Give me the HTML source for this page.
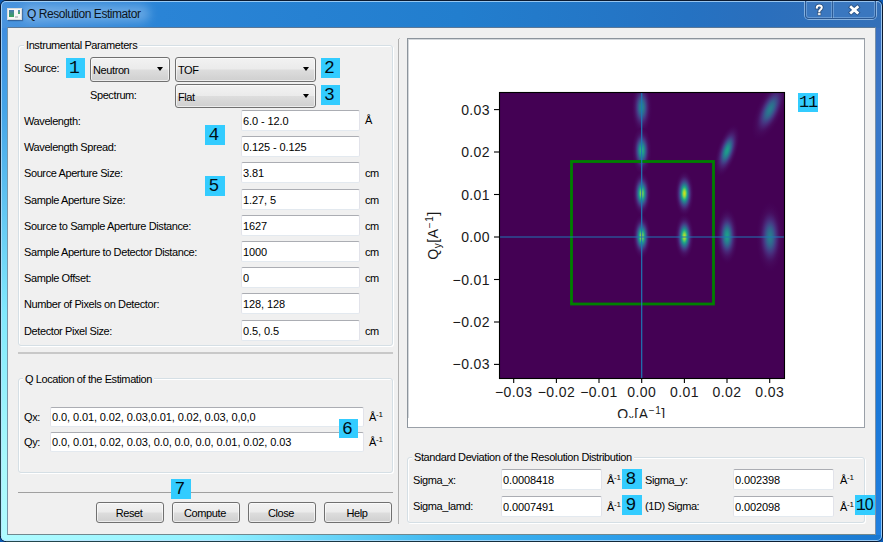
<!DOCTYPE html>
<html><head><meta charset="utf-8">
<style>
*{box-sizing:border-box}
html,body{margin:0;padding:0;width:883px;height:542px;overflow:hidden;background:#0c5ab2}
body{position:relative;font-family:"Liberation Sans",sans-serif;font-size:11px;color:#000}
.a{position:absolute}
#frame{left:0;top:0;width:883px;height:542px;border-radius:6px;background:#2d7ad0;border:1px solid #0b1a30;overflow:hidden}
#tb{left:0;top:0;width:881px;height:27px;background:linear-gradient(90deg,#4a94de 0%,#3a8cda 8%,#2a84d6 18%,#227ece 52%,#2572c2 78%,#2a6fbd 86%,#3470b8 100%)}
#lf{left:0;top:27px;width:7px;height:514px;background:linear-gradient(180deg,#3f8ee0 0%,#45a5e8 16%,#80e8fc 55%,#a8f8fc 84%,#b0fcff 100%)}
#rf{left:875px;top:27px;width:7px;height:514px;background:linear-gradient(180deg,#3a70c0 0%,#3a78c8 16%,#1a78d8 74%,#2080e0 100%)}
#bf{left:0;top:534px;width:881px;height:7px;background:linear-gradient(90deg,#b0fcff 0%,#90f0ff 25%,#40b8f0 50%,#2898e8 75%,#1a78d0 100%)}
#client{left:7px;top:27px;width:869px;height:508px;background:#f0f0f0;border:1px solid #5a7898;border-left-color:#7896a8;border-right-color:#7890a8;border-bottom-color:#70888e}
.t{position:absolute;white-space:nowrap;letter-spacing:-0.4px;line-height:13px;height:13px}
.badge{position:absolute;background:#33ccff;font-family:"Liberation Mono",monospace;font-size:18px;line-height:20px;text-align:center;text-indent:-2px;color:#001018}
.edit{position:absolute;background:#fff;border:1px solid #e2e3ea;border-top-color:#abadb3;border-bottom-color:#e3e9ef;border-radius:2px;height:21px}
.edit span{position:absolute;left:1px;top:4px;white-space:nowrap;letter-spacing:-0.1px;line-height:13px}
.btn{position:absolute;border:1px solid #707070;border-radius:3px;background:linear-gradient(180deg,#f2f2f2 0%,#ebebeb 48%,#dddddd 52%,#cfcfcf 100%);box-shadow:inset 0 0 0 1px rgba(255,255,255,.6)}
.btn span{position:absolute;left:0;right:0;text-align:center;white-space:nowrap;letter-spacing:-0.4px;line-height:13px}
.arrow{position:absolute;width:0;height:0;border-left:3.5px solid transparent;border-right:3.5px solid transparent;border-top:4px solid #000}
.grp{position:absolute;border:1px solid #d5dfe5;border-radius:3px;box-shadow:inset 1px 1px 0 #fff, 1px 1px 0 #fff}
.gt{position:absolute;background:#f0f0f0;padding:0 2px;white-space:nowrap;letter-spacing:-0.4px;line-height:13px}
.sup{font-size:8px;vertical-align:4px;letter-spacing:0}
</style></head><body>
<div id="frame" class="a">
  <div id="tb" class="a"></div>
  <div id="lf" class="a"></div>
  <div id="rf" class="a"></div>
  <div id="bf" class="a"></div>
  <div class="a" style="left:0;top:0;width:881px;height:540px;border-radius:5px;box-shadow:inset 0 0 0 1px rgba(190,225,255,.75)"></div>
</div>
<div class="a" style="left:0;top:40px;width:1px;height:496px;background:linear-gradient(180deg,#0b1a30,#23484e)"></div>
<div class="a" style="left:6px;top:541px;width:871px;height:1px;background:linear-gradient(90deg,#23484e,#0b1a30)"></div>
<!-- title icon -->
<div class="a" style="left:7px;top:8px;width:15px;height:12px;background:#f6f6f6;border:1px solid #d8dcdc;box-shadow:1px 1px 1px rgba(20,40,80,.45)"></div>
<div class="a" style="left:9px;top:10px;width:5px;height:7px;background:linear-gradient(180deg,#4a78b0,#3aa060 90%)"></div>
<div class="a" style="left:18px;top:10px;width:2px;height:4px;background:linear-gradient(180deg,#5080c0,#40b050)"></div>
<div class="a" style="left:15px;top:16px;width:3px;height:2px;background:#c8cacc"></div>
<div class="a" style="left:22px;top:5px;width:128px;height:17px;border-radius:9px;background:rgba(225,240,255,.3);filter:blur(5px)"></div>
<div class="t" style="left:27px;top:8px;font-size:12px;letter-spacing:-0.45px;color:#0c1420">Q Resolution Estimator</div>
<!-- title buttons -->
<div class="a" style="left:804px;top:1px;width:73px;height:19px;border:1px solid rgba(170,205,240,.7);border-top:none;border-radius:0 0 5px 5px"></div>
<div class="a" style="left:805px;top:1px;width:71px;height:18px;border:1px solid rgba(25,50,90,.45);border-top:none;border-radius:0 0 4px 4px;background:#3a77bf"></div>
<div class="a" style="left:806px;top:1px;width:69px;height:17px;border:1px solid rgba(170,205,240,.4);border-top-color:rgba(190,225,255,.7);border-radius:0 0 3px 3px"></div>
<div class="a" style="left:831px;top:1px;width:1px;height:17px;background:rgba(170,205,240,.4)"></div>
<div class="a" style="left:832px;top:1px;width:1px;height:17px;background:rgba(25,50,90,.4)"></div>
<div class="a" style="left:833px;top:1px;width:1px;height:17px;background:rgba(170,205,240,.4)"></div>
<svg class="a" style="left:800px;top:0px" width="70" height="22">
 <g stroke-linecap="square">
 <path d="M16.8 7.6 Q17 5.5 19.3 5.5 Q21.8 5.5 21.8 7.6 Q21.8 9 20.3 9.8 Q19.3 10.3 19.3 11.5" fill="none" stroke="#1a2a44" stroke-width="3.6" stroke-opacity=".55"/>
 <path d="M16.8 7.6 Q17 5.5 19.3 5.5 Q21.8 5.5 21.8 7.6 Q21.8 9 20.3 9.8 Q19.3 10.3 19.3 11.5" fill="none" stroke="#fff" stroke-width="2"/>
 <rect x="17.8" y="12.8" width="3" height="2.4" fill="#fff" stroke="#1a2a44" stroke-opacity=".5" stroke-width=".8"/>
 <path d="M51.2 7.2 L57.3 12.6 M57.3 7.2 L51.2 12.6" stroke="#1a2a44" stroke-opacity=".45" stroke-width="4.6"/>
 <path d="M51.2 7.2 L57.3 12.6 M57.3 7.2 L51.2 12.6" stroke="#fff" stroke-width="2.8"/>
 </g>
</svg>

<div id="client" class="a"></div>

<!-- Instrumental Parameters group -->
<div class="grp" style="left:18px;top:45px;width:375px;height:301px"></div>
<div class="gt" style="left:24px;top:39px">Instrumental Parameters</div>
<div class="t" style="left:24px;top:62px">Source:</div>
<div class="badge" style="left:66px;top:58px;width:19px;height:20px">1</div>
<div class="btn" style="left:90px;top:57px;width:80px;height:25px"><span style="left:2px;right:auto;top:6px">Neutron</span><div class="arrow" style="left:66px;top:9px"></div></div>
<div class="btn" style="left:175px;top:57px;width:141px;height:25px"><span style="left:2px;right:auto;top:6px">TOF</span><div class="arrow" style="left:127px;top:9px"></div></div>
<div class="badge" style="left:321px;top:58px;width:19px;height:20px">2</div>
<div class="t" style="left:90px;top:89px">Spectrum:</div>
<div class="btn" style="left:175px;top:84px;width:141px;height:24px"><span style="left:2px;right:auto;top:6px">Flat</span><div class="arrow" style="left:127px;top:9px"></div></div>
<div class="badge" style="left:321px;top:85px;width:19px;height:20px">3</div>

<div class="t" style="left:24px;top:115px">Wavelength:</div>
<div class="t" style="left:24px;top:141px">Wavelength Spread:</div>
<div class="t" style="left:24px;top:167px">Source Aperture Size:</div>
<div class="t" style="left:24px;top:194px">Sample Aperture Size:</div>
<div class="t" style="left:24px;top:220px">Source to Sample Aperture Distance:</div>
<div class="t" style="left:24px;top:246px">Sample Aperture to Detector Distance:</div>
<div class="t" style="left:24px;top:272px">Sample Offset:</div>
<div class="t" style="left:24px;top:298px">Number of Pixels on Detector:</div>
<div class="t" style="left:24px;top:325px">Detector Pixel Size:</div>
<div class="badge" style="left:205px;top:125px;width:20px;height:20px">4</div>
<div class="badge" style="left:205px;top:176px;width:20px;height:20px">5</div>

<div class="edit" style="left:241px;top:110px;width:119px"><span>6.0 - 12.0</span></div>
<div class="edit" style="left:241px;top:136px;width:119px"><span>0.125 - 0.125</span></div>
<div class="edit" style="left:241px;top:162px;width:119px"><span>3.81</span></div>
<div class="edit" style="left:241px;top:189px;width:119px"><span>1.27, 5</span></div>
<div class="edit" style="left:241px;top:215px;width:119px"><span>1627</span></div>
<div class="edit" style="left:241px;top:241px;width:119px"><span>1000</span></div>
<div class="edit" style="left:241px;top:267px;width:119px"><span>0</span></div>
<div class="edit" style="left:241px;top:293px;width:119px"><span>128, 128</span></div>
<div class="edit" style="left:241px;top:320px;width:119px"><span>0.5, 0.5</span></div>
<div class="t" style="left:365px;top:114px">Å</div>
<div class="t" style="left:365px;top:167px">cm</div>
<div class="t" style="left:365px;top:194px">cm</div>
<div class="t" style="left:365px;top:220px">cm</div>
<div class="t" style="left:365px;top:246px">cm</div>
<div class="t" style="left:365px;top:272px">cm</div>
<div class="t" style="left:365px;top:325px">cm</div>

<!-- separator -->
<div class="a" style="left:18px;top:352px;width:375px;height:2px;background:#c8c8c8"></div>

<!-- Q location group -->
<div class="grp" style="left:18px;top:378px;width:375px;height:95px"></div>
<div class="gt" style="left:23px;top:373px">Q Location of the Estimation</div>
<div class="t" style="left:24px;top:411px">Qx:</div>
<div class="t" style="left:24px;top:436px">Qy:</div>
<div class="edit" style="left:50px;top:407px;width:314px;height:20px"><span style="top:3px">0.0, 0.01, 0.02, 0.03,0.01, 0.02, 0.03, 0,0,0</span></div>
<div class="edit" style="left:50px;top:432px;width:314px;height:20px"><span style="top:3px">0.0, 0.01, 0.02, 0.03, 0.0, 0.0, 0.0, 0.01, 0.02, 0.03</span></div>
<div class="t" style="left:369px;top:408px">Å<span class="sup">-1</span></div>
<div class="t" style="left:369px;top:433px">Å<span class="sup">-1</span></div>
<div class="badge" style="left:339px;top:419px;width:19px;height:19px">6</div>

<!-- bottom separator & buttons -->
<div class="a" style="left:18px;top:492px;width:375px;height:1px;background:#a0a0a0"></div>
<div class="badge" style="left:171px;top:479px;width:20px;height:20px">7</div>
<div class="btn" style="left:96px;top:502px;width:68px;height:21px"><span style="top:4px;left:-1px;right:1px">Reset</span></div>
<div class="btn" style="left:172px;top:502px;width:68px;height:21px"><span style="top:4px;left:-1px;right:1px">Compute</span></div>
<div class="btn" style="left:248px;top:502px;width:68px;height:21px"><span style="top:4px;left:-1px;right:1px">Close</span></div>
<div class="btn" style="left:324px;top:502px;width:68px;height:21px"><span style="top:4px;left:-1px;right:1px">Help</span></div>

<!-- splitter -->
<div class="a" style="left:398px;top:39px;width:1px;height:485px;background:#b0b0b0"></div><div class="a" style="left:399px;top:38px;width:1px;height:1px;background:#c4c4c4"></div>

<!-- canvas -->
<div class="a" style="left:407px;top:38px;width:458px;height:390px;background:#fff;border:1px solid #9aa0a8;border-top-color:#8c949c;border-left-color:#8c949c;overflow:hidden;box-shadow:inset 1px 1px 0 #d4d8dc">
<svg width="456" height="388" viewBox="408 39 456 388" style="position:absolute;left:0;top:0;font-family:'Liberation Sans',sans-serif">
<style>.tl{font-size:14px;fill:#1a1a1a;letter-spacing:0.4px}.al{font-size:14px;fill:#1a1a1a;letter-spacing:0.6px}</style>
<defs><clipPath id="axclip"><rect x="499" y="92" width="285" height="286"/></clipPath><radialGradient id="g0"><stop offset="0.000" stop-color="#23898e"/><stop offset="0.071" stop-color="#24868e"/><stop offset="0.143" stop-color="#277e8e"/><stop offset="0.214" stop-color="#2c718e"/><stop offset="0.286" stop-color="#33628d"/><stop offset="0.357" stop-color="#3c508b"/><stop offset="0.429" stop-color="#433e85"/><stop offset="0.500" stop-color="#472e7c"/><stop offset="0.571" stop-color="#482071"/><stop offset="0.643" stop-color="#481668"/><stop offset="0.714" stop-color="#470d60"/><stop offset="0.786" stop-color="#46085c"/><stop offset="0.857" stop-color="#450457"/><stop offset="0.929" stop-color="#440256"/><stop offset="1.000" stop-color="#440154"/></radialGradient><radialGradient id="g1"><stop offset="0.000" stop-color="#3bbb75"/><stop offset="0.071" stop-color="#34b679"/><stop offset="0.143" stop-color="#25ab82"/><stop offset="0.214" stop-color="#1f998a"/><stop offset="0.286" stop-color="#25838e"/><stop offset="0.357" stop-color="#2e6d8e"/><stop offset="0.429" stop-color="#39558c"/><stop offset="0.500" stop-color="#424086"/><stop offset="0.571" stop-color="#472d7b"/><stop offset="0.643" stop-color="#481d6f"/><stop offset="0.714" stop-color="#471365"/><stop offset="0.786" stop-color="#460b5e"/><stop offset="0.857" stop-color="#46075a"/><stop offset="0.929" stop-color="#450457"/><stop offset="1.000" stop-color="#440256"/></radialGradient><radialGradient id="g2"><stop offset="0.000" stop-color="#b0dd2f"/><stop offset="0.071" stop-color="#a0da39"/><stop offset="0.143" stop-color="#75d054"/><stop offset="0.214" stop-color="#42be71"/><stop offset="0.286" stop-color="#20a386"/><stop offset="0.357" stop-color="#24868e"/><stop offset="0.429" stop-color="#306a8e"/><stop offset="0.500" stop-color="#3c508b"/><stop offset="0.571" stop-color="#443983"/><stop offset="0.643" stop-color="#482677"/><stop offset="0.714" stop-color="#48186a"/><stop offset="0.786" stop-color="#470e61"/><stop offset="0.857" stop-color="#46085c"/><stop offset="0.929" stop-color="#450457"/><stop offset="1.000" stop-color="#440256"/></radialGradient><radialGradient id="g3"><stop offset="0.000" stop-color="#bddf26"/><stop offset="0.071" stop-color="#addc30"/><stop offset="0.143" stop-color="#81d34d"/><stop offset="0.214" stop-color="#4ac16d"/><stop offset="0.286" stop-color="#21a685"/><stop offset="0.357" stop-color="#23888e"/><stop offset="0.429" stop-color="#2f6c8e"/><stop offset="0.500" stop-color="#3b528b"/><stop offset="0.571" stop-color="#443a83"/><stop offset="0.643" stop-color="#482677"/><stop offset="0.714" stop-color="#48186a"/><stop offset="0.786" stop-color="#470e61"/><stop offset="0.857" stop-color="#46085c"/><stop offset="0.929" stop-color="#450457"/><stop offset="1.000" stop-color="#440256"/></radialGradient><radialGradient id="g4"><stop offset="0.000" stop-color="#cae11f"/><stop offset="0.071" stop-color="#bade28"/><stop offset="0.143" stop-color="#8ed645"/><stop offset="0.214" stop-color="#52c569"/><stop offset="0.286" stop-color="#24aa83"/><stop offset="0.357" stop-color="#228b8d"/><stop offset="0.429" stop-color="#2e6e8e"/><stop offset="0.500" stop-color="#3a538b"/><stop offset="0.571" stop-color="#443b84"/><stop offset="0.643" stop-color="#482878"/><stop offset="0.714" stop-color="#481a6c"/><stop offset="0.786" stop-color="#470e61"/><stop offset="0.857" stop-color="#46085c"/><stop offset="0.929" stop-color="#450457"/><stop offset="1.000" stop-color="#440256"/></radialGradient><radialGradient id="g5"><stop offset="0.000" stop-color="#bddf26"/><stop offset="0.071" stop-color="#addc30"/><stop offset="0.143" stop-color="#81d34d"/><stop offset="0.214" stop-color="#4ac16d"/><stop offset="0.286" stop-color="#21a685"/><stop offset="0.357" stop-color="#23888e"/><stop offset="0.429" stop-color="#2f6c8e"/><stop offset="0.500" stop-color="#3b528b"/><stop offset="0.571" stop-color="#443a83"/><stop offset="0.643" stop-color="#482677"/><stop offset="0.714" stop-color="#48186a"/><stop offset="0.786" stop-color="#470e61"/><stop offset="0.857" stop-color="#46085c"/><stop offset="0.929" stop-color="#450457"/><stop offset="1.000" stop-color="#440256"/></radialGradient><radialGradient id="g6"><stop offset="0.000" stop-color="#1f9f88"/><stop offset="0.071" stop-color="#1e9b8a"/><stop offset="0.143" stop-color="#20928c"/><stop offset="0.214" stop-color="#26828e"/><stop offset="0.286" stop-color="#2d718e"/><stop offset="0.357" stop-color="#365d8d"/><stop offset="0.429" stop-color="#3f4889"/><stop offset="0.500" stop-color="#453581"/><stop offset="0.571" stop-color="#482576"/><stop offset="0.643" stop-color="#481a6c"/><stop offset="0.714" stop-color="#471063"/><stop offset="0.786" stop-color="#460a5d"/><stop offset="0.857" stop-color="#450559"/><stop offset="0.929" stop-color="#440256"/><stop offset="1.000" stop-color="#440154"/></radialGradient><radialGradient id="g7"><stop offset="0.000" stop-color="#287d8e"/><stop offset="0.071" stop-color="#297a8e"/><stop offset="0.143" stop-color="#2c728e"/><stop offset="0.214" stop-color="#31678e"/><stop offset="0.286" stop-color="#38598c"/><stop offset="0.357" stop-color="#3f4889"/><stop offset="0.429" stop-color="#453882"/><stop offset="0.500" stop-color="#482979"/><stop offset="0.571" stop-color="#481d6f"/><stop offset="0.643" stop-color="#471365"/><stop offset="0.714" stop-color="#460b5e"/><stop offset="0.786" stop-color="#46075a"/><stop offset="0.857" stop-color="#450457"/><stop offset="0.929" stop-color="#440256"/><stop offset="1.000" stop-color="#440154"/></radialGradient><radialGradient id="g8"><stop offset="0.000" stop-color="#1f9f88"/><stop offset="0.071" stop-color="#1e9b8a"/><stop offset="0.143" stop-color="#20928c"/><stop offset="0.214" stop-color="#26828e"/><stop offset="0.286" stop-color="#2d718e"/><stop offset="0.357" stop-color="#365d8d"/><stop offset="0.429" stop-color="#3f4889"/><stop offset="0.500" stop-color="#453581"/><stop offset="0.571" stop-color="#482576"/><stop offset="0.643" stop-color="#481a6c"/><stop offset="0.714" stop-color="#471063"/><stop offset="0.786" stop-color="#460a5d"/><stop offset="0.857" stop-color="#450559"/><stop offset="0.929" stop-color="#440256"/><stop offset="1.000" stop-color="#440154"/></radialGradient><radialGradient id="g9"><stop offset="0.000" stop-color="#287d8e"/><stop offset="0.071" stop-color="#297a8e"/><stop offset="0.143" stop-color="#2c728e"/><stop offset="0.214" stop-color="#31678e"/><stop offset="0.286" stop-color="#38598c"/><stop offset="0.357" stop-color="#3f4889"/><stop offset="0.429" stop-color="#453882"/><stop offset="0.500" stop-color="#482979"/><stop offset="0.571" stop-color="#481d6f"/><stop offset="0.643" stop-color="#471365"/><stop offset="0.714" stop-color="#460b5e"/><stop offset="0.786" stop-color="#46075a"/><stop offset="0.857" stop-color="#450457"/><stop offset="0.929" stop-color="#440256"/><stop offset="1.000" stop-color="#440154"/></radialGradient></defs>
<rect x="499" y="92" width="285" height="286" fill="#440154"/>
<g clip-path="url(#axclip)"><ellipse cx="641.7" cy="107.5" rx="10.6" ry="26.9" fill="url(#g0)" transform="rotate(0.0 641.7 107.5)"/><ellipse cx="641.7" cy="150.5" rx="9.6" ry="23.0" fill="url(#g1)" transform="rotate(0.0 641.7 150.5)"/><ellipse cx="641.7" cy="193.5" rx="9.0" ry="21.4" fill="url(#g2)" transform="rotate(0.0 641.7 193.5)"/><ellipse cx="641.7" cy="236.5" rx="9.0" ry="21.4" fill="url(#g3)" transform="rotate(0.0 641.7 236.5)"/><ellipse cx="684.4" cy="193.5" rx="9.3" ry="22.1" fill="url(#g4)" transform="rotate(0.0 684.4 193.5)"/><ellipse cx="684.4" cy="236.5" rx="9.3" ry="22.1" fill="url(#g5)" transform="rotate(0.0 684.4 236.5)"/><ellipse cx="727.1" cy="236.0" rx="11.2" ry="28.2" fill="url(#g6)" transform="rotate(0.0 727.1 236.0)"/><ellipse cx="770.0" cy="237.0" rx="13.8" ry="35.2" fill="url(#g7)" transform="rotate(0.0 770.0 237.0)"/><ellipse cx="727.1" cy="150.5" rx="10.2" ry="27.5" fill="url(#g8)" transform="rotate(18.0 727.1 150.5)"/><ellipse cx="770.0" cy="109.5" rx="13.1" ry="33.3" fill="url(#g9)" transform="rotate(25.0 770.0 109.5)"/>
<rect x="571.5" y="161.5" width="142" height="142.5" fill="none" stroke="#008000" stroke-width="2.8"/>
<line x1="641.7" y1="92" x2="641.7" y2="378" stroke="#1f77b4" stroke-width="1.2"/>
<line x1="499" y1="237.0" x2="784" y2="237.0" stroke="#1f77b4" stroke-width="1.2"/>
</g>
<rect x="499.5" y="92.5" width="285" height="286" fill="none" stroke="#000" stroke-width="1.1"/>
<line x1="513.7" y1="378" x2="513.7" y2="383" stroke="#000" stroke-width="1.1"/><text x="513.7" y="397" text-anchor="middle" class="tl">−0.03</text><line x1="556.4" y1="378" x2="556.4" y2="383" stroke="#000" stroke-width="1.1"/><text x="556.4" y="397" text-anchor="middle" class="tl">−0.02</text><line x1="599.0" y1="378" x2="599.0" y2="383" stroke="#000" stroke-width="1.1"/><text x="599.0" y="397" text-anchor="middle" class="tl">−0.01</text><line x1="641.7" y1="378" x2="641.7" y2="383" stroke="#000" stroke-width="1.1"/><text x="641.7" y="397" text-anchor="middle" class="tl">0.00</text><line x1="684.4" y1="378" x2="684.4" y2="383" stroke="#000" stroke-width="1.1"/><text x="684.4" y="397" text-anchor="middle" class="tl">0.01</text><line x1="727.0" y1="378" x2="727.0" y2="383" stroke="#000" stroke-width="1.1"/><text x="727.0" y="397" text-anchor="middle" class="tl">0.02</text><line x1="769.7" y1="378" x2="769.7" y2="383" stroke="#000" stroke-width="1.1"/><text x="769.7" y="397" text-anchor="middle" class="tl">0.03</text><line x1="494" y1="364.4" x2="499.5" y2="364.4" stroke="#000" stroke-width="1.1"/><text x="490" y="369.4" text-anchor="end" class="tl">−0.03</text><line x1="494" y1="322.0" x2="499.5" y2="322.0" stroke="#000" stroke-width="1.1"/><text x="490" y="327.0" text-anchor="end" class="tl">−0.02</text><line x1="494" y1="279.5" x2="499.5" y2="279.5" stroke="#000" stroke-width="1.1"/><text x="490" y="284.5" text-anchor="end" class="tl">−0.01</text><line x1="494" y1="237.0" x2="499.5" y2="237.0" stroke="#000" stroke-width="1.1"/><text x="490" y="242.0" text-anchor="end" class="tl">0.00</text><line x1="494" y1="194.5" x2="499.5" y2="194.5" stroke="#000" stroke-width="1.1"/><text x="490" y="199.5" text-anchor="end" class="tl">0.01</text><line x1="494" y1="152.0" x2="499.5" y2="152.0" stroke="#000" stroke-width="1.1"/><text x="490" y="157.0" text-anchor="end" class="tl">0.02</text><line x1="494" y1="109.6" x2="499.5" y2="109.6" stroke="#000" stroke-width="1.1"/><text x="490" y="114.6" text-anchor="end" class="tl">0.03</text>
<text x="641.5" y="419" text-anchor="middle" class="al">Q<tspan font-size="10" dy="3">x</tspan><tspan dy="-3">[A</tspan><tspan font-size="10" dy="-5">−1</tspan><tspan dy="5">]</tspan></text>
<rect x="408" y="418" width="456" height="9" fill="#fff"/>
<text transform="translate(438 235.5) rotate(-90)" x="0" y="0" text-anchor="middle" class="al">Q<tspan font-size="10" dy="3">y</tspan><tspan dy="-3">[A</tspan><tspan font-size="10" dy="-5">−1</tspan><tspan dy="5">]</tspan></text>
</svg>
</div>
<div class="badge" style="left:798px;top:93px;width:20px;height:19px;font-size:17px;line-height:20px;letter-spacing:-1.2px;text-indent:0px">11</div>

<!-- std dev group -->
<div class="grp" style="left:407px;top:457px;width:458px;height:66px"></div>
<div class="gt" style="left:412px;top:451px">Standard Deviation of the Resolution Distribution</div>
<div class="t" style="left:413px;top:474px">Sigma_x:</div>
<div class="t" style="left:413px;top:500px">Sigma_lamd:</div>
<div class="edit" style="left:501px;top:469px;width:101px;height:21px"><span>0.0008418</span></div>
<div class="edit" style="left:501px;top:496px;width:101px;height:21px"><span>0.0007491</span></div>
<div class="t" style="left:607px;top:471px">Å<span class="sup">-1</span></div>
<div class="t" style="left:607px;top:498px">Å<span class="sup">-1</span></div>
<div class="badge" style="left:622px;top:469px;width:20px;height:20px">8</div>
<div class="badge" style="left:622px;top:495px;width:20px;height:20px">9</div>
<div class="t" style="left:645px;top:474px">Sigma_y:</div>
<div class="t" style="left:645px;top:500px">(1D) Sigma:</div>
<div class="edit" style="left:733px;top:469px;width:101px;height:21px"><span>0.002398</span></div>
<div class="edit" style="left:733px;top:496px;width:101px;height:21px"><span>0.002098</span></div>
<div class="t" style="left:840px;top:471px">Å<span class="sup">-1</span></div>
<div class="t" style="left:840px;top:498px">Å<span class="sup">-1</span></div>
<div class="badge" style="left:855px;top:495px;width:20px;height:20px;font-size:17px;line-height:20px;letter-spacing:-1.2px;text-indent:-2px">1<span style="font-family:'Liberation Sans',sans-serif;font-size:16px">0</span></div>
</body></html>
